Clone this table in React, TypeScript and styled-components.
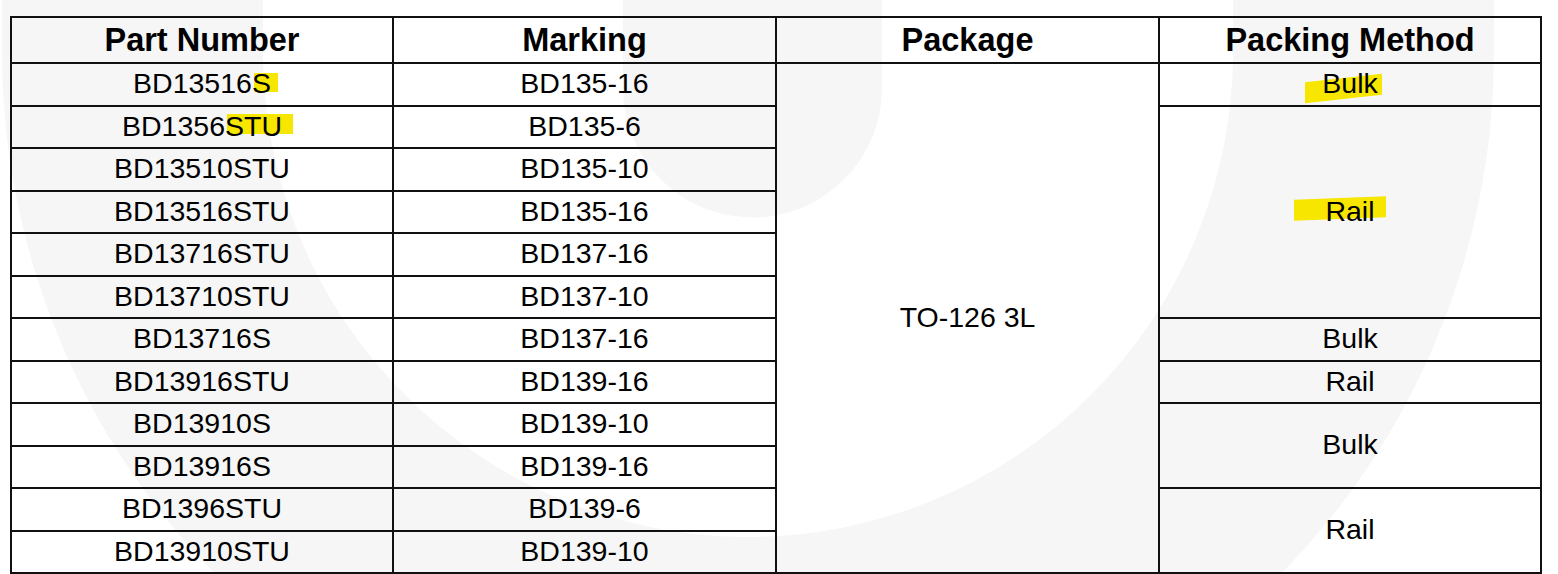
import React from 'react';
import styled, { createGlobalStyle } from 'styled-components';

const GlobalStyle = createGlobalStyle`
  html, body { margin: 0; padding: 0; background: #ffffff; }
  body { font-family: "Liberation Sans", Arial, Helvetica, sans-serif; color: #000; }
`;

const Page = styled.div`
  position: relative;
  width: 1558px;
  height: 574px;
  overflow: hidden;
  box-sizing: border-box;
  padding: 16px 0 0 10px;
  background: #ffffff;
`;

const Watermark = styled.svg`
  position: absolute;
  left: 0;
  top: 0;
  width: 1558px;
  height: 574px;
  z-index: 0;
`;

const Table = styled.table`
  position: relative;
  z-index: 1;
  border-collapse: separate;
  border-spacing: 0;
  table-layout: fixed;
  width: 1532px;
  border-top: 2px solid #111;
  border-left: 2px solid #111;
`;

const Col = styled.col<{ $w: number }>`
  width: ${(p) => p.$w}px;
`;

const Row = styled.tr<{ $h: number }>`
  height: ${(p) => p.$h}px;
`;

const HeadCell = styled.th`
  box-sizing: border-box;
  padding: 0;
  border-right: 2px solid #111;
  border-bottom: 2px solid #111;
  font-size: 32.5px;
  font-weight: 700;
  text-align: center;
  vertical-align: middle;
  white-space: nowrap;
`;

const Cell = styled.td`
  box-sizing: border-box;
  padding: 0 0 2px 0;
  border-right: 2px solid #111;
  border-bottom: 2px solid #111;
  font-size: 28.5px;
  font-weight: 400;
  text-align: center;
  vertical-align: middle;
  white-space: nowrap;
`;

const Marker = styled.span<{ $l: number; $r: number; $t: number; $b: number; $skew?: number }>`
  position: relative;
  isolation: isolate;
  &::before {
    content: '';
    position: absolute;
    left: ${(p) => p.$l}px;
    right: ${(p) => p.$r}px;
    top: ${(p) => p.$t}px;
    bottom: ${(p) => p.$b}px;
    background: #f7e600;
    z-index: -1;
    transform: skewY(${(p) => p.$skew ?? 0}deg);
  }
`;

type Pack = { label: string; span: number; mark?: 'bulk' | 'rail' };

const rows: { part: React.ReactNode; marking: string; pack?: Pack }[] = [
  {
    part: (
      <>
        BD13516<Marker $l={2} $r={-7} $t={6.4} $b={7}>S</Marker>
      </>
    ),
    marking: 'BD135-16',
    pack: { label: 'Bulk', span: 1, mark: 'bulk' },
  },
  {
    part: (
      <>
        BD1356<Marker $l={1.5} $r={-10.5} $t={4.4} $b={7.4}>STU</Marker>
      </>
    ),
    marking: 'BD135-6',
    pack: { label: 'Rail', span: 5, mark: 'rail' },
  },
  { part: 'BD13510STU', marking: 'BD135-10' },
  { part: 'BD13516STU', marking: 'BD135-16' },
  { part: 'BD13716STU', marking: 'BD137-16' },
  { part: 'BD13710STU', marking: 'BD137-10' },
  { part: 'BD13716S', marking: 'BD137-16', pack: { label: 'Bulk', span: 1 } },
  { part: 'BD13916STU', marking: 'BD139-16', pack: { label: 'Rail', span: 1 } },
  { part: 'BD13910S', marking: 'BD139-10', pack: { label: 'Bulk', span: 2 } },
  { part: 'BD13916S', marking: 'BD139-16' },
  { part: 'BD1396STU', marking: 'BD139-6', pack: { label: 'Rail', span: 2 } },
  { part: 'BD13910STU', marking: 'BD139-10' },
];

function PackLabel({ pack }: { pack: Pack }) {
  if (pack.mark === 'bulk') {
    return (
      <Marker $l={-17.3} $r={-4.3} $t={10.6} $b={0.7} $skew={-6.3}>
        {pack.label}
      </Marker>
    );
  }
  if (pack.mark === 'rail') {
    return (
      <Marker $l={-31.5} $r={-11.5} $t={3.6} $b={7.2} $skew={-2.2}>
        {pack.label}
      </Marker>
    );
  }
  return <>{pack.label}</>;
}

export default function App() {
  return (
    <Page>
      <GlobalStyle />
      <Watermark viewBox="0 0 1558 574" aria-hidden="true">
        <path
          fill="#f6f6f6"
          d="M 2 -10 L 2 52 A 746 746 0 0 0 1494 52 L 1494 -10 L 1233 -10 L 1233 52 A 485 485 0 0 1 263 52 L 263 -10 Z"
        />
        <path fill="#f6f6f6" d="M 623 -10 L 623 88 A 129.5 129.5 0 0 0 882 88 L 882 -10 Z" />
      </Watermark>
      <Table>
        <colgroup>
          <Col $w={382} />
          <Col $w={383} />
          <Col $w={383} />
          <Col $w={382} />
        </colgroup>
        <thead>
          <Row $h={46}>
            <HeadCell>Part Number</HeadCell>
            <HeadCell>Marking</HeadCell>
            <HeadCell>Package</HeadCell>
            <HeadCell>Packing Method</HeadCell>
          </Row>
        </thead>
        <tbody>
          {rows.map((r, i) => (
            <Row key={i} $h={i % 2 === 0 ? 43 : 42}>
              <Cell>{r.part}</Cell>
              <Cell>{r.marking}</Cell>
              {i === 0 && <Cell rowSpan={12}>TO-126 3L</Cell>}
              {r.pack && (
                <Cell rowSpan={r.pack.span}>
                  <PackLabel pack={r.pack} />
                </Cell>
              )}
            </Row>
          ))}
        </tbody>
      </Table>
    </Page>
  );
}
